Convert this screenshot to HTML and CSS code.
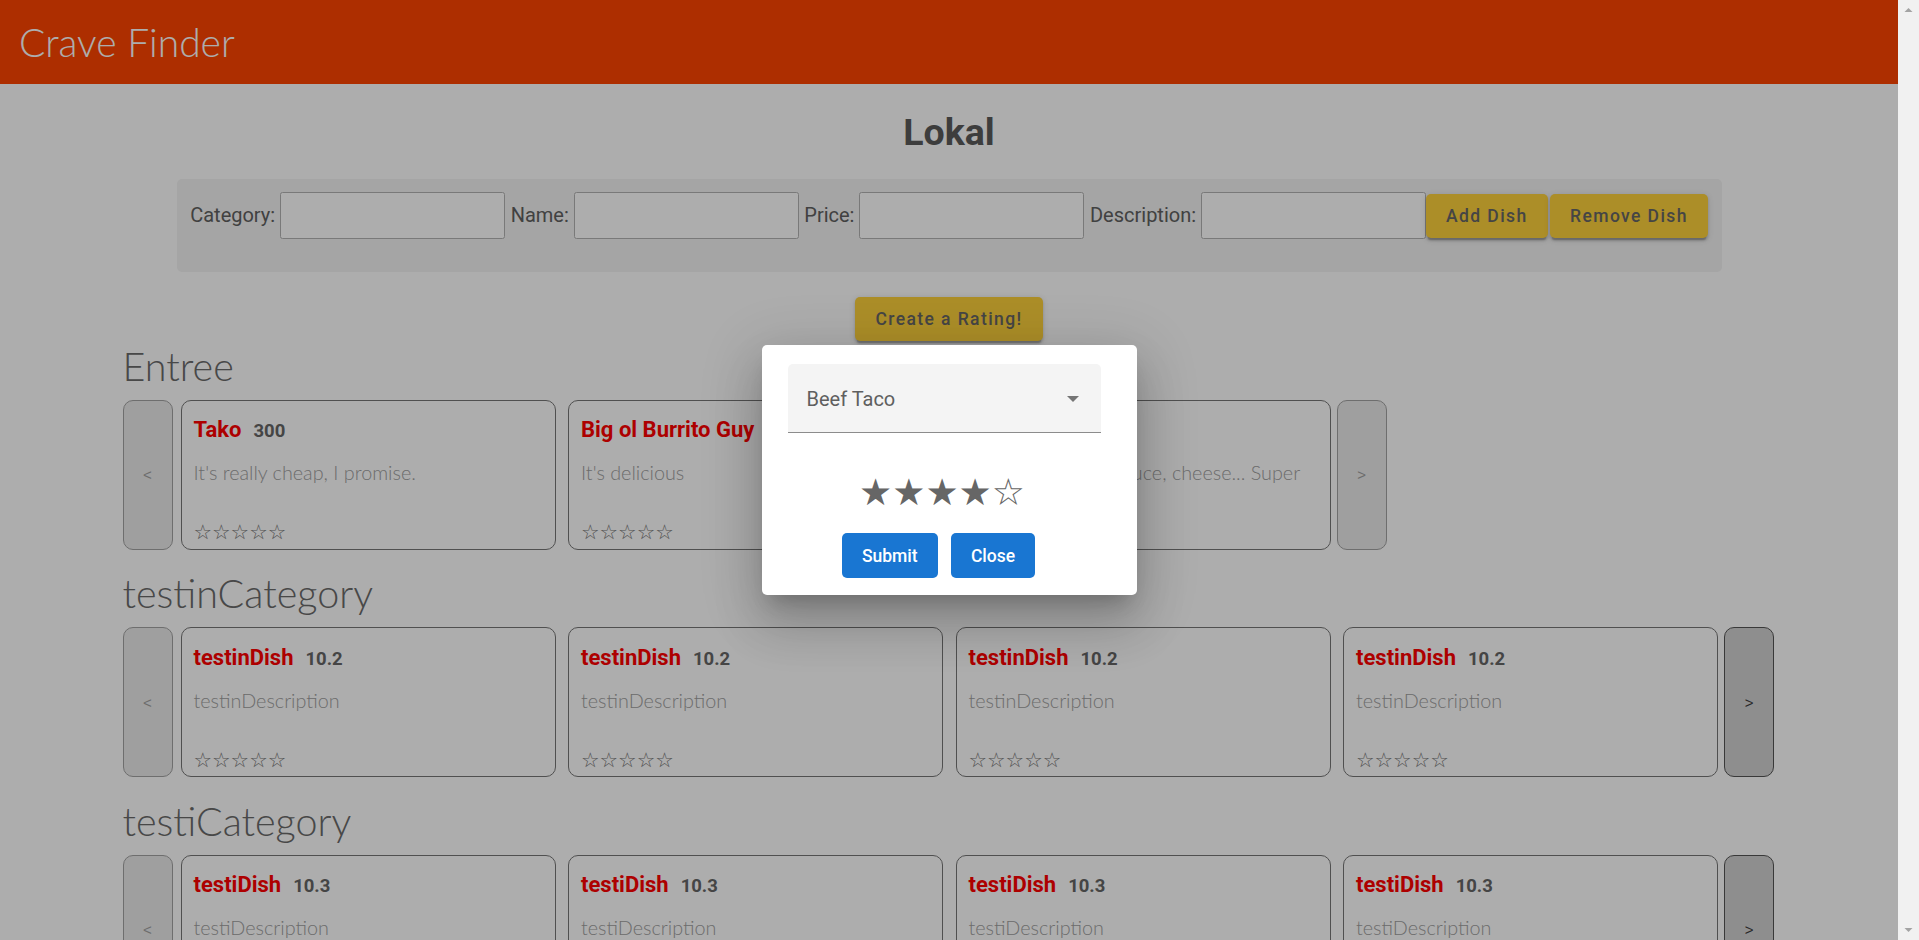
FILE: index.html
```html
<!DOCTYPE html>
<html lang="en">
<head>
<meta charset="utf-8">
<title>Crave Finder</title>
<link rel="stylesheet" href="styles.css">
</head>
<body>
<div class="page">
  <header class="appbar"><h1 class="brand">Crave Finder</h1></header>
  <main class="restaurant">
    <h2 class="restaurant-name">Lokal</h2>
    <form class="dish-form">
      <label class="form-label">Category:</label><input class="form-input" type="text">
      <label class="form-label">Name:</label><input class="form-input" type="text">
      <label class="form-label">Price:</label><input class="form-input" type="text">
      <label class="form-label">Description:</label><input class="form-input last" type="text">
      <button type="button" class="btn-raised">Add Dish</button>
      <button type="button" class="btn-raised second">Remove Dish</button>
    </form>
    <div class="rating-action"><button type="button" class="btn-raised">Create a Rating!</button></div>

    <section class="category">
      <h3 class="category-title">Entree</h3>
      <div class="carousel">
        <button type="button" class="nav prev" disabled>&lt;</button>
        <article class="dish-card">
          <div class="dish-head"><span class="dish-name">Tako</span><span class="dish-price">300</span></div>
          <p class="dish-desc">It's really cheap, I promise.</p>
          <div class="dish-stars">☆☆☆☆☆</div>
        </article>
        <article class="dish-card">
          <div class="dish-head"><span class="dish-name">Big ol Burrito Guy</span><span class="dish-price">12</span></div>
          <p class="dish-desc">It's delicious</p>
          <div class="dish-stars">☆☆☆☆☆</div>
        </article>
        <article class="dish-card">
          <div class="dish-head"><span class="dish-name">Beef Taco</span><span class="dish-price">2.5</span></div>
          <p class="dish-desc">Chicken, lettuce, sauce, cheese... Super tasty!</p>
          <div class="dish-stars">☆☆☆☆☆</div>
        </article>
        <button type="button" class="nav next" disabled>&gt;</button>
      </div>
    </section>

    <section class="category">
      <h3 class="category-title">testinCategory</h3>
      <div class="carousel">
        <button type="button" class="nav prev" disabled>&lt;</button>
        <article class="dish-card">
          <div class="dish-head"><span class="dish-name">testinDish</span><span class="dish-price">10.2</span></div>
          <p class="dish-desc">testinDescription</p>
          <div class="dish-stars">☆☆☆☆☆</div>
        </article>
        <article class="dish-card">
          <div class="dish-head"><span class="dish-name">testinDish</span><span class="dish-price">10.2</span></div>
          <p class="dish-desc">testinDescription</p>
          <div class="dish-stars">☆☆☆☆☆</div>
        </article>
        <article class="dish-card">
          <div class="dish-head"><span class="dish-name">testinDish</span><span class="dish-price">10.2</span></div>
          <p class="dish-desc">testinDescription</p>
          <div class="dish-stars">☆☆☆☆☆</div>
        </article>
        <article class="dish-card">
          <div class="dish-head"><span class="dish-name">testinDish</span><span class="dish-price">10.2</span></div>
          <p class="dish-desc">testinDescription</p>
          <div class="dish-stars">☆☆☆☆☆</div>
        </article>
        <button type="button" class="nav next active">&gt;</button>
      </div>
    </section>

    <section class="category">
      <h3 class="category-title">testiCategory</h3>
      <div class="carousel">
        <button type="button" class="nav prev" disabled>&lt;</button>
        <article class="dish-card">
          <div class="dish-head"><span class="dish-name">testiDish</span><span class="dish-price">10.3</span></div>
          <p class="dish-desc">testiDescription</p>
          <div class="dish-stars">☆☆☆☆☆</div>
        </article>
        <article class="dish-card">
          <div class="dish-head"><span class="dish-name">testiDish</span><span class="dish-price">10.3</span></div>
          <p class="dish-desc">testiDescription</p>
          <div class="dish-stars">☆☆☆☆☆</div>
        </article>
        <article class="dish-card">
          <div class="dish-head"><span class="dish-name">testiDish</span><span class="dish-price">10.3</span></div>
          <p class="dish-desc">testiDescription</p>
          <div class="dish-stars">☆☆☆☆☆</div>
        </article>
        <article class="dish-card">
          <div class="dish-head"><span class="dish-name">testiDish</span><span class="dish-price">10.3</span></div>
          <p class="dish-desc">testiDescription</p>
          <div class="dish-stars">☆☆☆☆☆</div>
        </article>
        <button type="button" class="nav next active">&gt;</button>
      </div>
    </section>
  </main>

  <div class="backdrop">
    <div class="dialog" role="dialog">
      <div class="select-field">
        <span class="select-value">Beef Taco</span>
        <span class="select-arrow"></span>
      </div>
      <div class="rating-stars">★★★★☆</div>
      <div class="dialog-actions">
        <button type="button" class="btn-flat">Submit</button>
        <button type="button" class="btn-flat">Close</button>
      </div>
    </div>
  </div>
</div>
<div class="scrollbar" aria-hidden="true">
  <svg class="sb-arrow" width="21" height="21" viewBox="0 0 21 21"><path d="M6.5 12 L10.5 8 L14.5 12 Z" fill="#a3a3a3"/></svg>
  <svg class="sb-arrow" width="21" height="21" viewBox="0 0 21 21"><path d="M6.5 9 L10.5 13 L14.5 9 Z" fill="#a3a3a3"/></svg>
</div>
</body>
</html>
```

FILE: styles.css
```css
body {
  margin: 0;
  height: 940px;
  overflow: hidden;
  display: flex;
  background: #ffffff;
  font-family: Roboto, "Liberation Sans", Arial, sans-serif;
}

.page {
  position: relative;
  flex: 1 1 auto;
  min-width: 0;
  height: 940px;
  overflow: hidden;
}

.scrollbar {
  width: 21px;
  flex: 0 0 21px;
  height: 940px;
  background: #f1f1f1;
  display: flex;
  flex-direction: column;
  justify-content: space-between;
}
.sb-arrow {
  display: block;
}

/* ---------- app bar ---------- */
.appbar {
  height: 84px;
  background: #ff4500;
  display: flex;
  align-items: center;
  padding-left: 19px;
}
.brand {
  margin: 0;
  font-family: Lato, Roboto, sans-serif;
  font-size: 39px;
  font-weight: 300;
  line-height: 48px;
  color: #ffffff;
}

/* ---------- restaurant ---------- */
.restaurant {
  width: 1653px;
  margin: 0 auto;
}
.restaurant-name {
  margin: 26px 0 25px;
  text-align: center;
  font-size: 37.5px;
  font-weight: 700;
  line-height: 44px;
  color: #5a5a5a;
}

.dish-form {
  width: 1545px;
  height: 92.7px;
  box-sizing: border-box;
  margin: 0 auto;
  padding: 13px 0 0;
  background: #f3f3f3;
  border-radius: 5px;
  display: flex;
  justify-content: center;
  align-items: flex-start;
}
.form-label {
  flex: 0 0 auto;
  white-space: nowrap;
  font-size: 20px;
  line-height: 47px;
  color: #606060;
  margin-right: 5px;
}
.form-input {
  flex: 0 0 auto;
  width: 225px;
  height: 47px;
  box-sizing: border-box;
  margin: 0 5.5px 0 0;
  border: 1px solid #b3b3b3;
  border-radius: 2.5px;
  background: #ffffff;
}
.form-input.last {
  margin-right: 0;
}

.btn-raised {
  flex: 0 0 auto;
  white-space: nowrap;
  height: 44px;
  padding: 0 20px;
  border: 0;
  border-radius: 5px;
  background: #fed13b;
  color: #666666;
  font-family: Roboto, "Liberation Sans", Arial, sans-serif;
  font-size: 17.5px;
  font-weight: 500;
  letter-spacing: 1.4px;
  box-shadow: 0 3.75px 1.25px -2.5px rgba(0,0,0,.2), 0 2.5px 2.5px 0 rgba(0,0,0,.14), 0 1.25px 6.25px 0 rgba(0,0,0,.12);
}
.dish-form .btn-raised {
  margin-top: 2px;
}
.btn-raised.second {
  margin-left: 2.5px;
}
.rating-action {
  display: flex;
  justify-content: center;
  margin-top: 25.3px;
  margin-bottom: 1px;
}

/* ---------- categories ---------- */
.category + .category {
  margin-top: 19.5px;
}
.category-title {
  margin: 0 0 10px;
  font-family: Lato, Roboto, sans-serif;
  font-size: 39.5px;
  font-weight: 300;
  line-height: 47px;
  padding-bottom: 1px;
  color: #6a6a6a;
}
.carousel {
  display: flex;
  height: 150px;
}
.nav {
  width: 50px;
  height: 150px;
  box-sizing: border-box;
  padding: 0;
  border-radius: 10px;
  border: 1px solid #a2a2a2;
  background: #ebebeb;
  color: #a0a0a0;
  font-family: "Liberation Sans", Arial, sans-serif;
  font-size: 15px;
}
.nav.prev {
  margin-right: 1.75px;
}
.nav.active {
  border-color: #555555;
  background: #d1d1d1;
  color: #3a3a3a;
}

.dish-card {
  width: 375px;
  height: 150px;
  box-sizing: border-box;
  margin: 0 6.25px;
  padding: 14.5px 12px 4.5px;
  border: 1px solid #767676;
  border-radius: 10px;
  display: flex;
  flex-direction: column;
}
.dish-head {
  display: flex;
  align-items: baseline;
  gap: 12px;
  line-height: 30px;
  white-space: nowrap;
}
.dish-name {
  font-size: 22px;
  font-weight: 700;
  color: #ff0000;
}
.dish-price {
  font-size: 18.5px;
  font-weight: 700;
  color: #666666;
}
.dish-desc {
  margin: 13.9px 0 0;
  font-family: Lato, Roboto, sans-serif;
  font-size: 19.8px;
  font-weight: 300;
  line-height: 24px;
  color: #a0a0a0;
}
.dish-stars {
  margin-top: auto;
  font-family: "DejaVu Sans", sans-serif;
  font-size: 20.7px;
  line-height: 24px;
  color: #777777;
}

/* ---------- dialog ---------- */
.backdrop {
  position: absolute;
  inset: 0;
  background: rgba(0, 0, 0, .32);
  display: flex;
  align-items: center;
  justify-content: center;
}
.dialog {
  width: 375px;
  height: 250px;
  box-sizing: border-box;
  padding: 19px 36px 0 26px;
  background: #ffffff;
  border-radius: 5px;
  box-shadow: 0 14px 19px -9px rgba(0,0,0,.2), 0 30px 48px 4px rgba(0,0,0,.14), 0 11px 57px 10px rgba(0,0,0,.12);
}
.select-field {
  height: 69px;
  box-sizing: border-box;
  padding: 2px 21.5px 0 19px;
  background: #f4f4f4;
  border-radius: 5px 5px 0 0;
  border-bottom: 1px solid #8c8c8c;
  display: flex;
  align-items: center;
  justify-content: space-between;
}
.select-value {
  font-size: 20px;
  line-height: 24px;
  color: #5f5f5f;
}
.select-arrow {
  width: 0;
  height: 0;
  border-left: 6px solid transparent;
  border-right: 6px solid transparent;
  border-top: 6px solid #757575;
}
.rating-stars {
  margin-top: 39.5px;
  padding-right: 4px;
  text-align: center;
  font-family: "DejaVu Sans", sans-serif;
  font-size: 37px;
  line-height: 40px;
  color: #666666;
}
.dialog-actions {
  margin-top: 20.5px;
  padding-right: 11px;
  display: flex;
  justify-content: center;
  gap: 13.3px;
}
.btn-flat {
  height: 45px;
  padding: 0 20px;
  border: 0;
  border-radius: 5px;
  background: #1976d2;
  color: #ffffff;
  font-family: Roboto, "Liberation Sans", Arial, sans-serif;
  font-size: 17.5px;
  font-weight: 500;
}
```
